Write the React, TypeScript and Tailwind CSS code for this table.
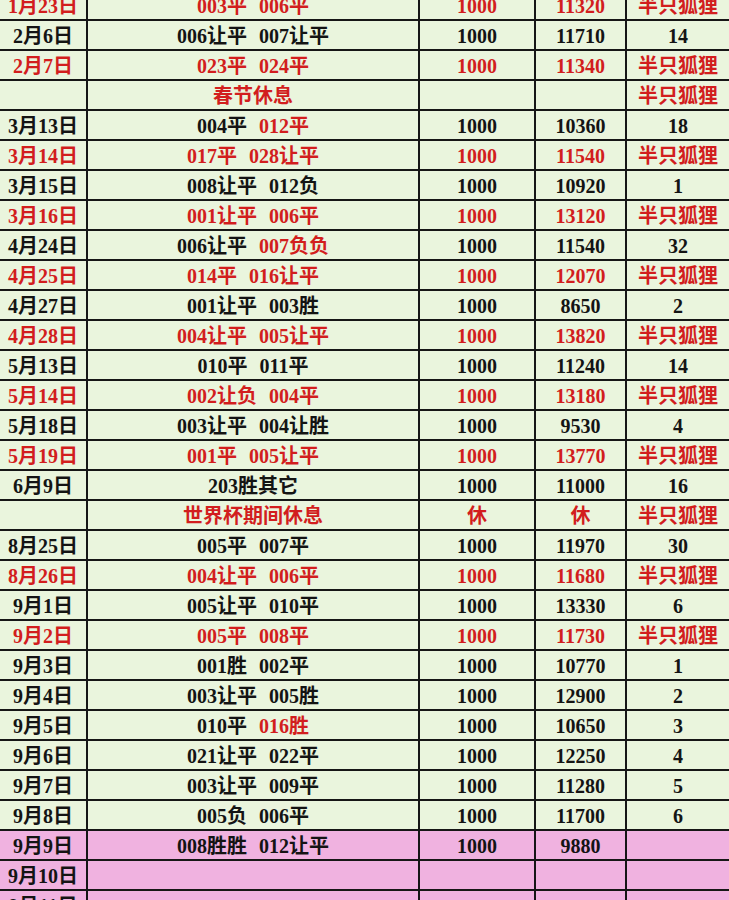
import React from "react";

type Part = [string, boolean];
type Row = {
  date: string;
  parts: Part[];
  a: string;
  b: string;
  c: string;
  red?: boolean;
  pink?: boolean;
};

const R = (s: string): Part => [s, true];
const B = (s: string): Part => [s, false];

const rows: Row[] = [
  { date: "1月23日", parts: [R("003平"), R("006平")], a: "1000", b: "11320", c: "半只狐狸", red: true },
  { date: "2月6日", parts: [B("006让平"), B("007让平")], a: "1000", b: "11710", c: "14" },
  { date: "2月7日", parts: [R("023平"), R("024平")], a: "1000", b: "11340", c: "半只狐狸", red: true },
  { date: "", parts: [R("春节休息")], a: "", b: "", c: "半只狐狸", red: true },
  { date: "3月13日", parts: [B("004平"), R("012平")], a: "1000", b: "10360", c: "18" },
  { date: "3月14日", parts: [R("017平"), R("028让平")], a: "1000", b: "11540", c: "半只狐狸", red: true },
  { date: "3月15日", parts: [B("008让平"), B("012负")], a: "1000", b: "10920", c: "1" },
  { date: "3月16日", parts: [R("001让平"), R("006平")], a: "1000", b: "13120", c: "半只狐狸", red: true },
  { date: "4月24日", parts: [B("006让平"), R("007负负")], a: "1000", b: "11540", c: "32" },
  { date: "4月25日", parts: [R("014平"), R("016让平")], a: "1000", b: "12070", c: "半只狐狸", red: true },
  { date: "4月27日", parts: [B("001让平"), B("003胜")], a: "1000", b: "8650", c: "2" },
  { date: "4月28日", parts: [R("004让平"), R("005让平")], a: "1000", b: "13820", c: "半只狐狸", red: true },
  { date: "5月13日", parts: [B("010平"), B("011平")], a: "1000", b: "11240", c: "14" },
  { date: "5月14日", parts: [R("002让负"), R("004平")], a: "1000", b: "13180", c: "半只狐狸", red: true },
  { date: "5月18日", parts: [B("003让平"), B("004让胜")], a: "1000", b: "9530", c: "4" },
  { date: "5月19日", parts: [R("001平"), R("005让平")], a: "1000", b: "13770", c: "半只狐狸", red: true },
  { date: "6月9日", parts: [B("203胜其它")], a: "1000", b: "11000", c: "16" },
  { date: "", parts: [R("世界杯期间休息")], a: "休", b: "休", c: "半只狐狸", red: true },
  { date: "8月25日", parts: [B("005平"), B("007平")], a: "1000", b: "11970", c: "30" },
  { date: "8月26日", parts: [R("004让平"), R("006平")], a: "1000", b: "11680", c: "半只狐狸", red: true },
  { date: "9月1日", parts: [B("005让平"), B("010平")], a: "1000", b: "13330", c: "6" },
  { date: "9月2日", parts: [R("005平"), R("008平")], a: "1000", b: "11730", c: "半只狐狸", red: true },
  { date: "9月3日", parts: [B("001胜"), B("002平")], a: "1000", b: "10770", c: "1" },
  { date: "9月4日", parts: [B("003让平"), B("005胜")], a: "1000", b: "12900", c: "2" },
  { date: "9月5日", parts: [B("010平"), R("016胜")], a: "1000", b: "10650", c: "3" },
  { date: "9月6日", parts: [B("021让平"), B("022平")], a: "1000", b: "12250", c: "4" },
  { date: "9月7日", parts: [B("003让平"), B("009平")], a: "1000", b: "11280", c: "5" },
  { date: "9月8日", parts: [B("005负"), B("006平")], a: "1000", b: "11700", c: "6" },
  { date: "9月9日", parts: [B("008胜胜"), B("012让平")], a: "1000", b: "9880", c: "", pink: true },
  { date: "9月10日", parts: [], a: "", b: "", c: "", pink: true },
  { date: "9月11日", parts: [], a: "", b: "", c: "", pink: true },
];

function Cell({ w, children, red, last }: { w: string; children?: React.ReactNode; red?: boolean; last?: boolean }) {
  return (
    <div
      className={`${w} h-full pt-[2px] flex items-center justify-center ${last ? "" : "border-r-2 border-[#161616]"} ${
        red ? "text-[#d21e1e]" : "text-[#141414]"
      }`}
    >
      {children}
    </div>
  );
}

export default function App() {
  return (
    <div className="w-[729px] h-[900px] overflow-hidden bg-[#eaf5dd]">
      <div
        className="-mt-[9px] text-[20px] font-bold leading-none"
        style={{ fontFamily: '"Liberation Serif", "Noto Sans CJK SC", serif' }}
      >
        {rows.map((r, i) => (
          <div
            key={i}
            className={`flex h-[30px] border-b-2 border-[#161616] ${r.pink ? "bg-[#f0b2e0]" : "bg-[#eaf5dd]"}`}
          >
            <Cell w="w-[88px]" red={r.red}>{r.date}</Cell>
            <Cell w="w-[332px]">
              <div className="flex gap-[12px]">
                {r.parts.map(([t, red], j) => (
                  <span key={j} className={red ? "text-[#d21e1e]" : "text-[#141414]"}>
                    {t}
                  </span>
                ))}
              </div>
            </Cell>
            <Cell w="w-[116px]" red={r.red}>{r.a}</Cell>
            <Cell w="w-[91px]" red={r.red}>{r.b}</Cell>
            <Cell w="w-[102px]" red={r.red} last>
              {r.c}
            </Cell>
          </div>
        ))}
      </div>
    </div>
  );
}
